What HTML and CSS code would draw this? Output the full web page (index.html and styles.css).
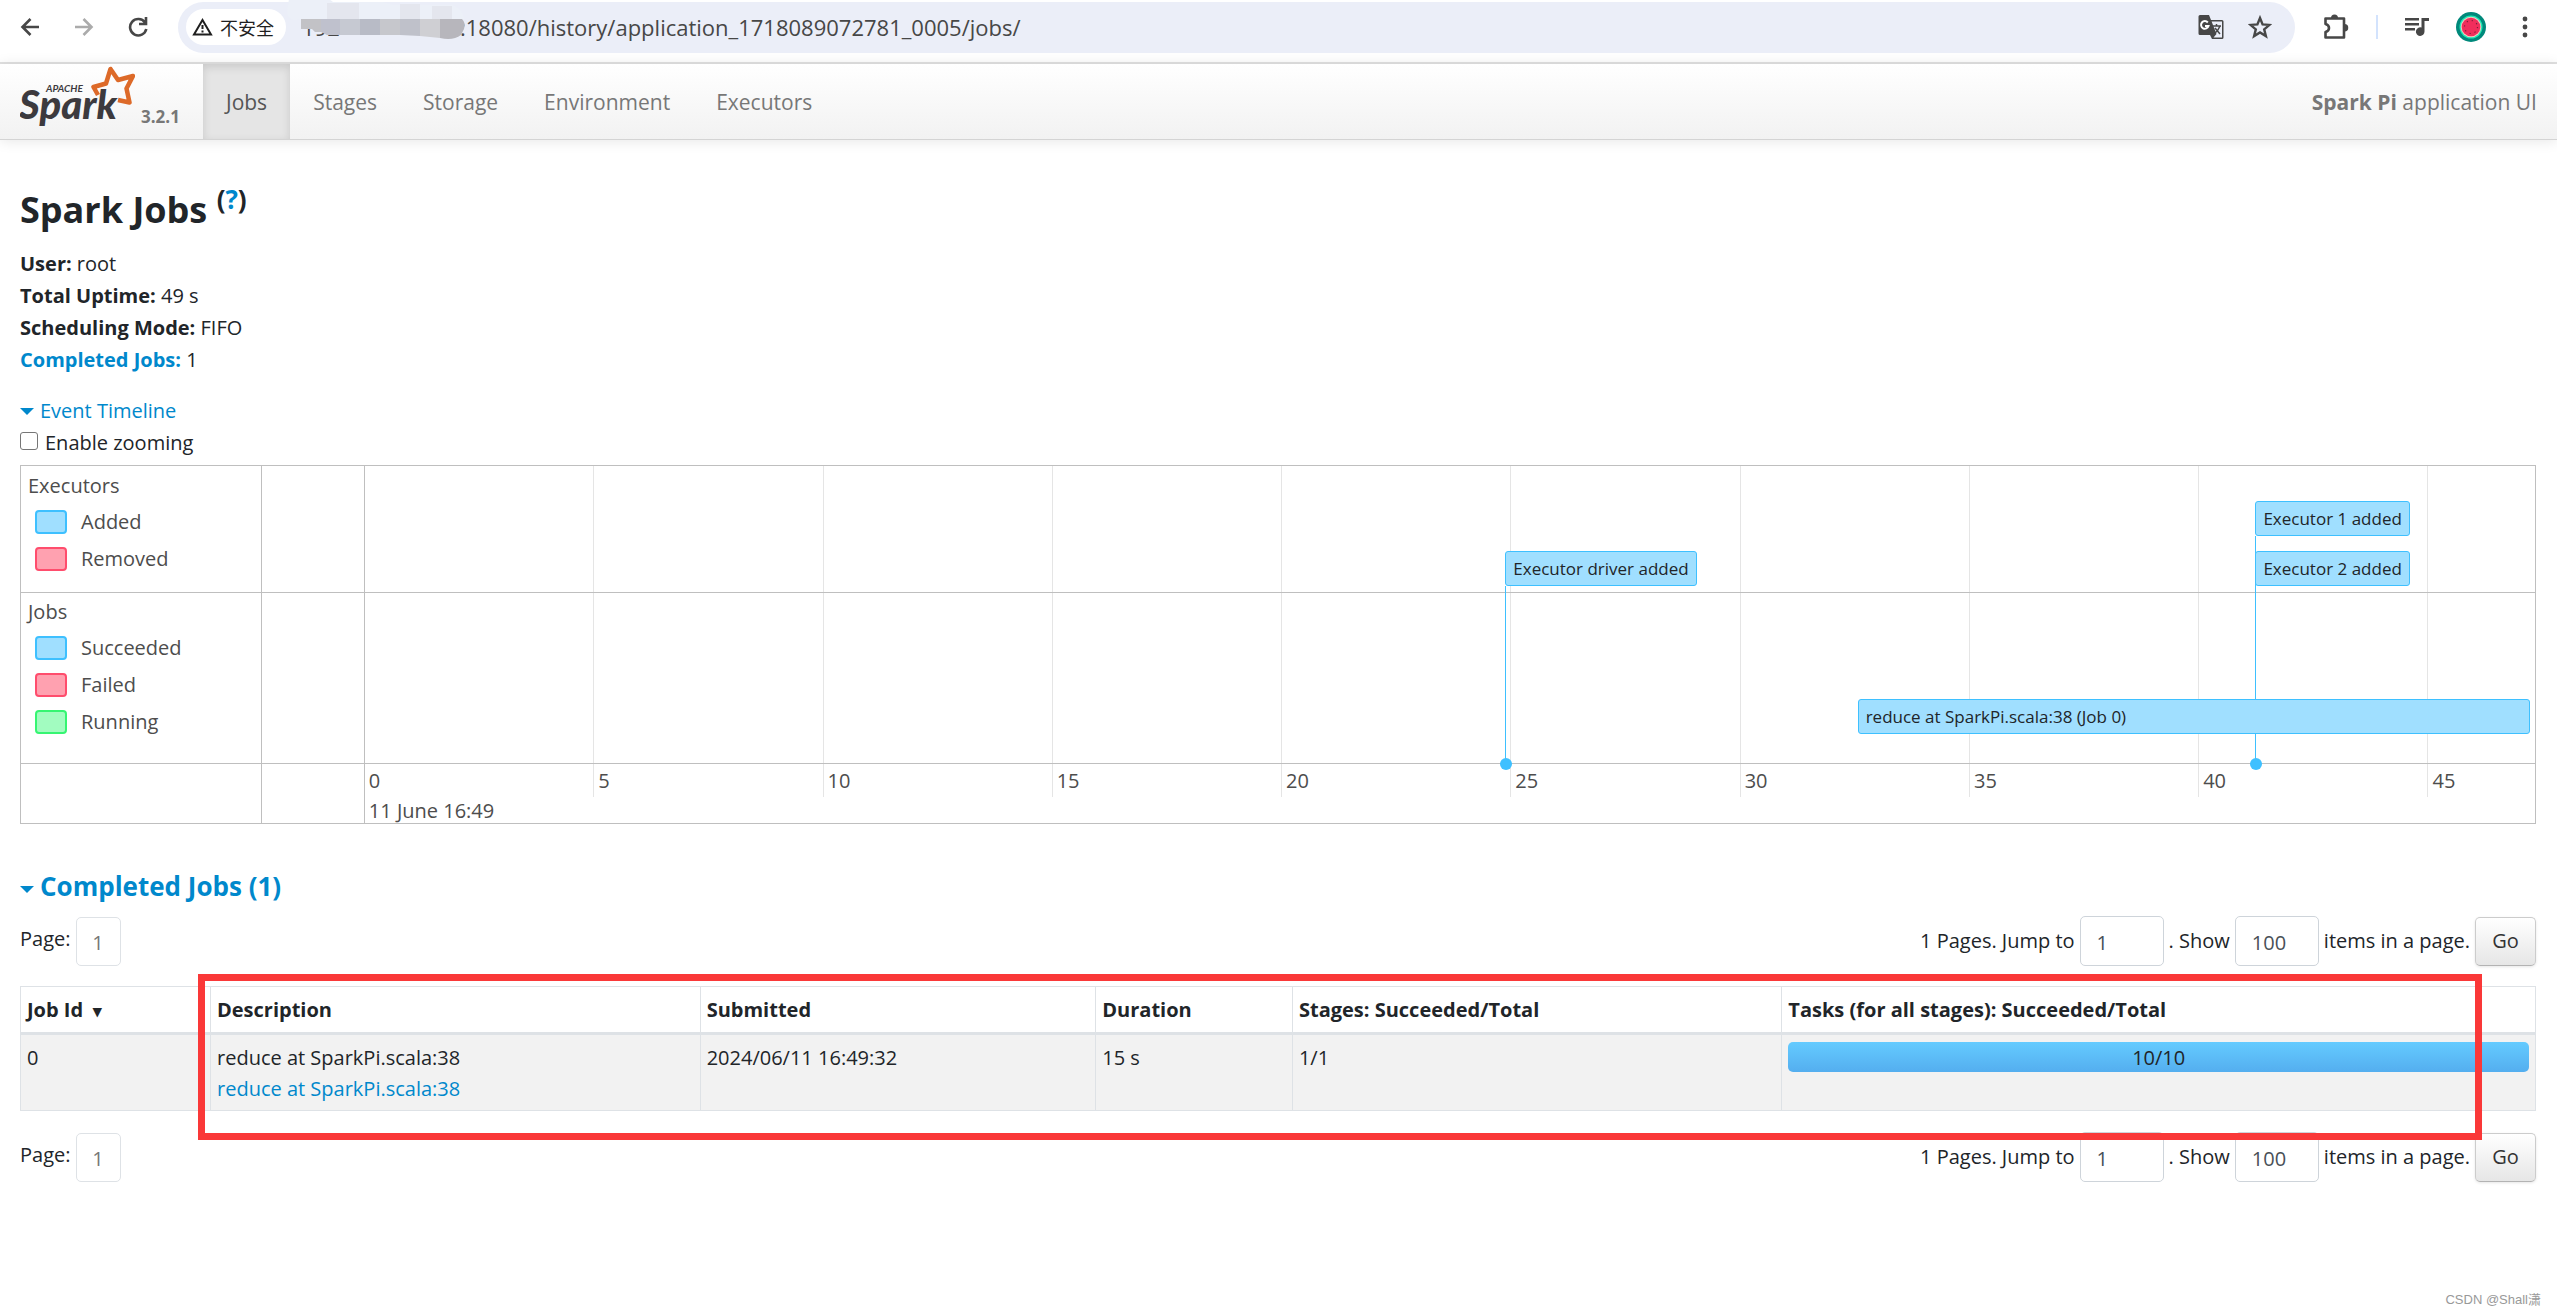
FILE: index.html
```html
<!DOCTYPE html>
<html lang="en">
<head>
<meta charset="utf-8">
<title>Spark Pi - Spark Jobs</title>
<link rel="stylesheet" href="styles.css">
</head>
<body>
<header class="browser">
  <button class="tool" aria-label="Back"><svg width="20" height="20" viewBox="0 0 20 20" fill="none" stroke="#474747" stroke-width="2.600"><path d="M19 10H3M10.500 2L2.500 10l8 8"/></svg></button>
  <button class="tool" aria-label="Forward"><svg width="20" height="20" viewBox="0 0 20 20" fill="none" stroke="#ababab" stroke-width="2.600"><path d="M1 10h16M9.500 2l8 8-8 8"/></svg></button>
  <button class="tool" aria-label="Reload"><svg width="20" height="20" viewBox="0 0 20 20" fill="none" stroke="#474747" stroke-width="2.600"><path d="M17 5.500A8.200 8.200 0 1 0 18.300 12M18 0v7h-7"/></svg></button>
  <div class="omnibox">
    <button class="chip"><svg width="21" height="18" viewBox="0 0 21 18" fill="none" stroke="#1f1f1f" stroke-width="2"><path d="M10.500 2L19 16.500H2z"/><path d="M10.500 7v4M10.500 12.500v2"/></svg>不安全</button>
    <div class="url"><span class="host">192<svg class="mask" width="180" height="42" viewBox="0 0 180 42"><path fill="#ecf0f8" d="M2 0h40l4 3h50l10 3h60q10 4 11 14H14Q0 24 0 12z"/><path fill="#e4e6ee" d="M40 4h32v16H40zM113 5h20v15h-20zM145 7h20v13h-20z"/><path fill="#c2c2c6" d="M14 20h20v13H28l-3-3H14z"/><path fill="#bfc1cd" d="M34 20h19v16H40l-6-3z"/><path fill="#c6c9d2" d="M53 20h20v16H53z"/><path fill="#b8bbc6" d="M73 20h20v16H73z"/><path fill="#c6c7cc" d="M93 20h20v16H93z"/><path fill="#bfc1ca" d="M113 20h20v17l-20-1z"/><path fill="#cfcfd3" d="M133 20h20v19l-20-2z"/><path fill="#b7b6bc" d="M153 20h22q4 4 2 10l-3 6q-8 6-21 3z"/></svg></span><span>:18080/history/application_1718089072781_0005/jobs/</span></div>
    <button class="tool" aria-label="Translate"><svg width="26" height="26" viewBox="0 0 26 26"><path fill="#474747" d="M2 1h9l2 5h11q1.500 0 1.500 1.500v16q0 1.500-1.500 1.500H14l-2-4H2q-1.500 0-1.500-1.500v-17Q.5 1 2 1z"/><path fill="#ebeef8" d="M13.600 7.500h10.400v16h-8.500l3-3.500z"/><path d="M9.800 8.500A3.800 3.800 0 1 0 10.500 12H7" fill="none" stroke="#fff" stroke-width="2"/><path d="M15 12h8M18.500 10v2M22 12q-2 5-5 7M17 14l5 6" fill="none" stroke="#474747" stroke-width="1.500"/></svg></button>
    <button class="tool" aria-label="Bookmark"><svg width="24" height="24" viewBox="0 0 24 24" fill="none" stroke="#474747" stroke-width="2.400"><path d="M12 3l2.600 6.400 6.900.5-5.300 4.500 1.700 6.700-5.900-3.700-5.900 3.700 1.700-6.700-5.300-4.500 6.900-.5z"/></svg></button>
  </div>
  <div class="actions">
    <button class="tool" aria-label="Extensions"><svg width="26" height="26" viewBox="0 0 26 26"><path d="M2.500 4.500h18.500v19H2.500v-5.500q3.500-1 3.500-4t-3.500-4z" fill="none" stroke="#474747" stroke-width="2.600" stroke-linejoin="round"/><path fill="#474747" d="M8 4a3.500 3.500 0 0 1 7 0zM21.500 10a3.700 3.700 0 0 1 0 7.500z"/></svg></button>
    <span class="divider"></span>
    <button class="tool" aria-label="Media"><svg width="24" height="20" viewBox="0 0 24 20" fill="#474747"><path d="M0 1h14v2.600H0zM0 6h14v2.600H0zM0 11h10v2.600H0zM16.500 1H24v3h-4.500v10.500a4.300 4.300 0 1 1-3-4z"/></svg></button>
    <button class="tool" aria-label="Profile"><svg width="30" height="30" viewBox="0 0 30 30"><circle cx="15" cy="15" r="15" fill="#00897b"/><circle cx="15" cy="15" r="11.500" fill="#1de9b6"/><circle cx="15" cy="15" r="10.300" fill="#f6c9c0"/><circle cx="15" cy="15" r="9.300" fill="#f02e5c"/><circle cx="15" cy="15" r="6.500" fill="none" stroke="#7c2038" stroke-width="1.200" stroke-dasharray="1.200 3.900"/></svg></button>
    <button class="tool menu" aria-label="Menu"><svg width="6" height="22" viewBox="0 0 6 22" fill="#474747"><circle cx="3" cy="3" r="2.400"/><circle cx="3" cy="11" r="2.400"/><circle cx="3" cy="19" r="2.400"/></svg></button>
  </div>
</header>

<nav class="navbar">
  <a class="brand" href="#">
    <svg width="115" height="66" viewBox="0 0 115 66" role="img" aria-label="Apache Spark">
      <text x="26" y="28" class="logo-small">APACHE</text>
      <text x="-1" y="55" class="logo-word">Spark</text>
      <path d="M78 31L73.500 23 86 19.500 90.500 5l7.500 11 15-4-6.500 12.500 3 14-11.500-2.500" fill="none" stroke="#dd6a29" stroke-width="4.500" stroke-linejoin="round"/>
    </svg>
    <span class="version">3.2.1</span>
  </a>
  <ul class="tabs">
    <li><a class="tab active" href="#">Jobs</a></li>
    <li><a class="tab" href="#">Stages</a></li>
    <li><a class="tab" href="#">Storage</a></li>
    <li><a class="tab" href="#">Environment</a></li>
    <li><a class="tab" href="#">Executors</a></li>
  </ul>
  <span class="app-name"><strong>Spark Pi</strong> application UI</span>
</nav>

<main class="page">
  <h1>Spark Jobs <sup>(<a href="#">?</a>)</sup></h1>
  <ul class="summary">
    <li><strong>User:</strong> root</li>
    <li><strong>Total Uptime:</strong> 49 s</li>
    <li><strong>Scheduling Mode:</strong> FIFO</li>
    <li><a href="#completed"><strong>Completed Jobs:</strong></a> 1</li>
  </ul>

  <a class="toggle" href="#timeline"><span class="caret"></span>Event Timeline</a>
  <div class="zooming"><input type="checkbox" id="zoom"><label for="zoom">Enable zooming</label></div>

  <section class="timeline" id="timeline">
    <div class="legend executors">
      <div>Executors</div>
      <div class="key"><span class="swatch blue"></span>Added</div>
      <div class="key"><span class="swatch red"></span>Removed</div>
    </div>
    <div class="legend jobs">
      <div>Jobs</div>
      <div class="key"><span class="swatch blue"></span>Succeeded</div>
      <div class="key"><span class="swatch red"></span>Failed</div>
      <div class="key"><span class="swatch green"></span>Running</div>
    </div>
    <div class="legend axis"></div>
    <div class="chart">
      <div class="tick major" style="left:4.480%"><span>0</span><span>11 June 16:49</span></div>
      <div class="tick" style="left:14.570%"><span>5</span></div>
      <div class="tick" style="left:24.660%"><span>10</span></div>
      <div class="tick" style="left:34.740%"><span>15</span></div>
      <div class="tick" style="left:44.830%"><span>20</span></div>
      <div class="tick" style="left:54.920%"><span>25</span></div>
      <div class="tick" style="left:65.010%"><span>30</span></div>
      <div class="tick" style="left:75.100%"><span>35</span></div>
      <div class="tick" style="left:85.180%"><span>40</span></div>
      <div class="tick" style="left:95.270%"><span>45</span></div>
      <div class="lane lane-executors"></div>
      <div class="lane lane-jobs"></div>
      <div class="stem low" style="left:54.700%"></div>
      <div class="stem high" style="left:87.700%"></div>
      <div class="event low" style="left:54.700%">Executor driver added</div>
      <div class="event high" style="left:87.700%">Executor 1 added</div>
      <div class="event low" style="left:87.700%">Executor 2 added</div>
      <div class="event job" style="left:70.200%;width:29.600%">reduce at SparkPi.scala:38 (Job 0)</div>
    </div>
  </section>

  <h2 id="completed"><a href="#completed"><span class="caret"></span>Completed Jobs (1)</a></h2>

  <div class="results">
    <form class="pager">
      <span class="page-label">Page:</span><a class="page-link" href="#">1</a>
      <div class="jump">
        <label for="jump-top">1 Pages. Jump to</label><input id="jump-top" type="text" value="1">
        <label for="size-top">. Show</label><input id="size-top" type="text" value="100">
        <span>items in a page.</span><button type="button" class="go">Go</button>
      </div>
    </form>
    <table>
      <colgroup><col class="c-id"><col class="c-desc"><col class="c-sub"><col class="c-dur"><col class="c-stages"><col></colgroup>
      <thead><tr><th>Job Id <span class="sort">▾</span></th><th>Description</th><th>Submitted</th><th>Duration</th><th>Stages: Succeeded/Total</th><th>Tasks (for all stages): Succeeded/Total</th></tr></thead>
      <tbody><tr><td>0</td><td>reduce at SparkPi.scala:38<br><a href="#">reduce at SparkPi.scala:38</a></td><td>2024/06/11 16:49:32</td><td>15 s</td><td>1/1</td><td><div class="progress">10/10</div></td></tr></tbody>
    </table>
    <form class="pager">
      <span class="page-label">Page:</span><a class="page-link" href="#">1</a>
      <div class="jump">
        <label for="jump-end">1 Pages. Jump to</label><input id="jump-end" type="text" value="1">
        <label for="size-end">. Show</label><input id="size-end" type="text" value="100">
        <span>items in a page.</span><button type="button" class="go">Go</button>
      </div>
    </form>
    <div class="highlight"></div>
  </div>
</main>
<div class="watermark">CSDN @Shall潇</div>
</body>
</html>
```
FILE: styles.css
```css
* { box-sizing: border-box; }
body {
  margin: 0;
  min-height: 100vh;
  position: relative;
  background: #fff;
  color: #212529;
  font: 20px/32px "Open Sans", "Noto Sans", "Noto Sans CJK SC", sans-serif;
}
a { color: #0088cc; text-decoration: none; }
ul { list-style: none; margin: 0; padding: 0; }
button, input { font: inherit; color: inherit; }
svg { display: block; flex: none; }

/* Browser toolbar */
.browser {
  display: flex;
  align-items: center;
  gap: 34px;
  height: 64px;
  padding: 0 29px 8px 20px;
  border-bottom: 2px solid #e1e1e1;
}
.tool { display: flex; border: 0; padding: 0; background: none; }
.omnibox {
  flex: 1;
  display: flex;
  align-items: center;
  gap: 24px;
  height: 51px;
  margin-left: -4px;
  padding: 0 23px 0 8px;
  border-radius: 26px;
  background: #ebeef8;
}
.chip {
  display: flex;
  align-items: center;
  gap: 7px;
  height: 36px;
  margin-right: -8px;
  padding: 0 12px 0 6px;
  border: 0;
  border-radius: 18px;
  background: #fff;
  font: 18px/36px "Noto Sans CJK SC", sans-serif;
  color: #1f1f1f;
}
.url { flex: 1; display: flex; color: #474747; font-size: 22px; }
.host { position: relative; width: 158px; }
.mask { position: absolute; left: -15px; top: -12px; }
.actions { display: flex; align-items: center; gap: 27px; margin-left: -6px; }
.divider { width: 2px; height: 24px; background: #d3e3fd; }
.menu { margin-left: 9px; }

/* Navigation bar */
.navbar {
  display: flex;
  align-items: stretch;
  height: 76px;
  padding: 0 20px;
  border-bottom: 1px solid #d4d4d4;
  background: linear-gradient(#fff, #f2f2f2);
  box-shadow: 0 1px 13px rgba(0, 0, 0, .1);
  color: #777;
  font-size: 21px;
}
.brand { display: flex; align-items: flex-start; gap: 6px; width: 183px; color: #777; }
.logo-small { font: italic 700 10px Lato, sans-serif; fill: #3c3a3e; }
.logo-word { font: italic 900 40px Lato, sans-serif; fill: #3c3a3e; }
.version { margin-top: 37px; font-size: 17px; font-weight: 700; }
.tabs { display: flex; flex: 1; }
.tab { display: block; height: 75px; padding: 0 23px; line-height: 76px; color: #777; }
.tab.active { background: #e5e5e5; color: #555; box-shadow: inset 0 3px 8px rgba(0, 0, 0, .125); }
.app-name { line-height: 76px; }

/* Page content */
.page { padding: 48px 21px 0 20px; }
h1 { margin: 0 0 16px; font-size: 36px; line-height: 44px; }
sup { font-size: 26px; line-height: 0; vertical-align: 14px; }
.summary { margin-bottom: 19px; }
.toggle { display: block; }
.caret {
  display: inline-block;
  margin-right: 6px;
  border: 7px solid transparent;
  border-top-color: #0088cc;
  border-bottom: 0;
  vertical-align: 3px;
}
.zooming { display: flex; align-items: center; gap: 7px; margin-bottom: 6px; }
.zooming input { appearance: none; width: 18px; height: 18px; margin: 0 0 4px; border: 1px solid #767676; border-radius: 3px; }

.timeline {
  display: grid;
  grid-template-columns: 241px 1fr;
  grid-template-rows: 126px 171px 60px;
  border: 1px solid #bfbfbf;
  color: #4d4d4d;
}
.legend { padding: 4px 7px; border-right: 1px solid #bfbfbf; }
.legend + .legend { padding-top: 3px; border-top: 1px solid #bfbfbf; }
.key { display: flex; align-items: center; gap: 14px; height: 37px; padding: 2px 0 0 7px; }
.swatch { width: 32px; height: 24px; border: 2px solid; border-radius: 4px; }
.blue { background: #a0dfff; border-color: #3ec0ff; }
.red { background: #ffa1b0; border-color: #ff4d6d; }
.green { background: #a2fcc0; border-color: #36f572; }
.chart { grid-column: 2; grid-row: 1 / 4; position: relative; }
.tick { position: absolute; top: 0; height: 331px; padding: 299px 0 0 4px; border-left: 1px solid #e5e5e5; white-space: nowrap; }
.tick.major { height: 100%; border-color: #bfbfbf; }
.tick span { display: block; height: 30px; }
.lane { position: absolute; left: 0; right: 0; height: 1px; background: #bfbfbf; }
.lane-executors { top: 126px; }
.lane-jobs { top: 297px; }
.event {
  position: absolute;
  height: 35px;
  padding: 0 7px;
  border: 1px solid #3ec0ff;
  border-radius: 3px;
  background: #a0dfff;
  color: #212529;
  font-size: 17px;
  line-height: 34px;
  white-space: nowrap;
}
.event.high { top: 35px; }
.event.low { top: 85px; }
.event.job { top: 233px; }
.stem { position: absolute; width: 1px; background: #3ec0ff; }
.stem.high { top: 70px; height: 227px; }
.stem.low { top: 120px; height: 177px; }
.stem::after {
  content: "";
  position: absolute;
  left: -5px;
  bottom: -7px;
  width: 12px;
  height: 12px;
  border-radius: 50%;
  background: #3ec0ff;
}

h2 { margin: 46px 0 14px; font-size: 26px; line-height: 32px; }
.results { position: relative; }
.pager { display: flex; align-items: center; gap: 5px; height: 50px; }
.page-label { margin-bottom: 4px; }
.page-link { width: 45px; height: 49px; border: 1px solid #dee2e6; border-radius: 5px; color: #777; line-height: 50px; text-align: center; }
.jump { display: flex; align-items: center; gap: 5px; margin-left: auto; }
.jump input { width: 84px; height: 50px; padding: 2px 16px 0; border: 1px solid #ced4da; border-radius: 5px; color: #495057; }
.go {
  width: 61px;
  height: 49px;
  padding: 0;
  border: 1px solid #ccc;
  border-bottom-color: #b3b3b3;
  border-radius: 5px;
  background: linear-gradient(#fff, #e6e6e6);
  box-shadow: 0 1px 3px rgba(0, 0, 0, .1);
  color: #333;
}

table { width: 100%; margin: 20px 0 21px; border-collapse: collapse; table-layout: fixed; line-height: 31px; }
.c-id { width: 190px; }
.c-desc { width: 19.470%; }
.c-sub { width: 15.730%; }
.c-dur { width: 7.820%; }
.c-stages { width: 19.460%; }
th, td { padding: 7px 6px 6px; border: 1px solid #dee2e6; text-align: left; vertical-align: top; }
th { border-bottom: 3px solid #dee2e6; color: #212529; }
tbody tr { background: #f2f2f2; }
.sort { margin-left: 5px; font-size: 17px; }
.progress { height: 30px; border-radius: 5px; background: linear-gradient(#64cbff, #54aeef); line-height: 32px; text-align: center; }

/* Annotation frame over the table */
.highlight { position: absolute; left: 178px; right: 54px; top: 58px; height: 166px; border: 7px solid #fa3838; pointer-events: none; }
.watermark { position: absolute; right: 16px; bottom: 4px; color: #999; font: 13px/24px "Liberation Sans", "Noto Sans CJK SC", sans-serif; }
```
